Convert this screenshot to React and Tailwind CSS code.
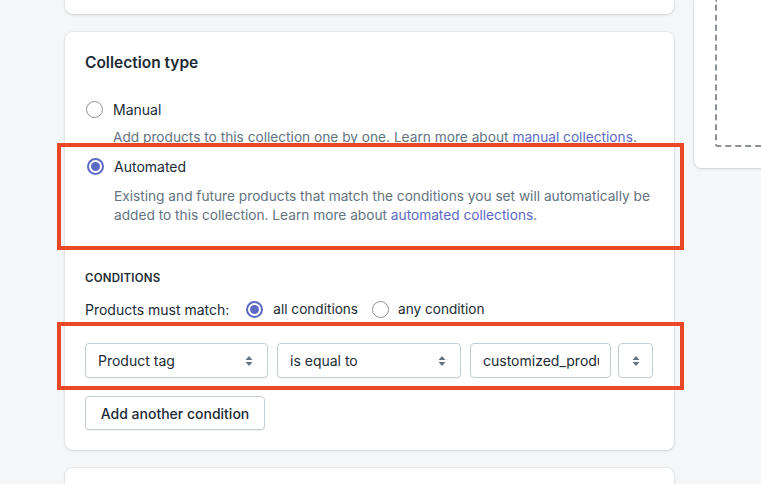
const Radio = ({ checked }) =>
  checked ? (
    <span className="w-[17px] h-[17px] rounded-full border-2 border-[#5c6ac4] flex items-center justify-center shrink-0 bg-white">
      <span className="block w-[9px] h-[9px] rounded-full bg-[#5c6ac4]" />
    </span>
  ) : (
    <span className="block w-[17px] h-[17px] rounded-full border-[1.5px] border-[#8c9196] bg-white shrink-0" />
  );

const Arrows = () => (
  <svg width="10" height="14" viewBox="0 0 10 14" className="shrink-0">
    <path d="M5 2 L8.5 6 H1.5 Z" fill="#637381" />
    <path d="M5 12 L8.5 8 H1.5 Z" fill="#637381" />
  </svg>
);

const Select = ({ label, width }) => (
  <div
    className={`${width} h-[35px] flex items-center justify-between pl-[12px] pr-[13px] border border-[#c4cdd5] rounded-[4px] bg-white shadow-[0_1px_0_rgba(22,29,37,0.05)]`}
  >
    <span className="text-[14px] text-[#212b36]">{label}</span>
    <Arrows />
  </div>
);

export default function App() {
  return (
    <div
      className="w-[761px] h-[484px] overflow-hidden bg-[#f4f6f8] flex items-start gap-[20px] pl-[65px]"
      style={{ fontFamily: "Inter, 'Noto Sans', sans-serif" }}
    >
      {/* main column */}
      <div className="w-[609px] shrink-0 flex flex-col gap-[18px]">
        <div className="shrink-0 h-[14px] bg-white rounded-b-[8px] shadow-[0_0_0_1px_rgba(63,63,68,0.05),0_1px_3px_rgba(63,63,68,0.15)]" />

        <div className="shrink-0 bg-white rounded-[8px] shadow-[0_0_0_1px_rgba(63,63,68,0.05),0_1px_3px_rgba(63,63,68,0.15)] px-[20px] pt-[21px] pb-[20px]">
          <h2 className="text-[15.5px] leading-[20px] font-semibold text-[#212b36]">Collection type</h2>

          <div className="mt-[26px] flex items-center h-[20px]">
            <span className="ml-px"><Radio /></span>
            <span className="ml-[10px] text-[14px] text-[#212b36]">Manual</span>
          </div>
          <p className="mt-[8px] ml-[28px] text-[13.7px] leading-[20px] text-[#637381]">
            Add products to this collection one by one. Learn more about{" "}
            <span className="text-[#5c6ac4]">manual collections</span>.
          </p>

          {/* annotation box */}
          <div className="relative -mt-[4px] -ml-[28px] -mr-[30px] border-4 border-[#ea4727] pl-[25px] pr-[30px] pt-[9px] pb-[21px]">
            <div className="flex items-center h-[20px]">
              <span className="ml-px"><Radio checked /></span>
              <span className="ml-[10px] text-[14px] text-[#212b36]">Automated</span>
            </div>
            <p className="mt-[11px] ml-[28px] text-[13.7px] leading-[19px] text-[#637381]">
              Existing and future products that match the conditions you set will automatically be added to this collection. Learn more about{" "}
              <span className="text-[#5c6ac4]">automated collections</span>.
            </p>
          </div>

          <div className="mt-[20px] text-[11.5px] leading-[16px] font-semibold text-[#212b36] tracking-[0.2px]">CONDITIONS</div>

          <div className="mt-[13px] flex items-center h-[20px] text-[14px] text-[#212b36]">
            <span>Products must match:</span>
            <span className="ml-[17px]"><Radio checked /></span>
            <span className="ml-[10px] text-[13.6px]">all conditions</span>
            <span className="ml-[14px]"><Radio /></span>
            <span className="ml-[9px] text-[13.6px]">any condition</span>
          </div>

          {/* annotation box */}
          <div className="mt-[3px] -ml-[28px] -mr-[30px] border-4 border-[#ea4727] pl-[24px] pt-[17px] pb-[8px] flex items-center">
            <Select label="Product tag" width="w-[183px]" />
            <div className="ml-[9px]">
              <Select label="is equal to" width="w-[184px]" />
            </div>
            <div className="ml-[9px] w-[141px] h-[35px] flex items-center pl-[12px] pr-[11px] border border-[#c4cdd5] rounded-[4px] bg-white">
              <span className="block w-full text-[14px] text-[#212b36] whitespace-nowrap overflow-hidden">customized_products</span>
            </div>
            <div className="ml-[7px] w-[35px] h-[35px] flex items-center justify-center border border-[#c4cdd5] rounded-[4px] bg-white">
              <Arrows />
            </div>
          </div>

          <button className="mt-[6px] h-[34px] w-[180px] border border-[#c4cdd5] rounded-[4px] bg-white text-[14px] font-medium text-[#212b36] shadow-[0_1px_0_rgba(22,29,37,0.05)]">
            Add another condition
          </button>
        </div>

        <div className="shrink-0 h-[40px] bg-white rounded-t-[8px] shadow-[0_0_0_1px_rgba(63,63,68,0.05),0_1px_3px_rgba(63,63,68,0.15)]" />
      </div>

      {/* side column */}
      <div className="w-[300px] shrink-0">
        <div className="h-[168px] bg-white rounded-b-[8px] shadow-[0_0_0_1px_rgba(63,63,68,0.05),0_1px_3px_rgba(63,63,68,0.15)] pl-[21px] pb-[21px]">
          <div className="h-full border-2 border-t-0 border-r-0 border-dashed border-[#8c9196] rounded-bl-[3px]" />
        </div>
      </div>
    </div>
  );
}
